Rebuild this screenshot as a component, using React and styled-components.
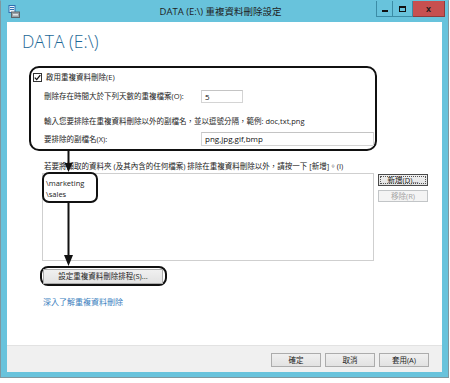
import React from "react";
import styled, { createGlobalStyle } from "styled-components";

const UI_FONT = `"Open Sans", "Noto Sans CJK TC", sans-serif`;

const GlobalStyle = createGlobalStyle`
  html, body {
    margin: 0;
    padding: 0;
    background: #ffffff;
  }
  body {
    font-family: ${UI_FONT};
    color: #222;
  }
  * {
    box-sizing: border-box;
  }
`;

const Window = styled.div`
  width: 449px;
  height: 378px;
  display: flex;
  flex-direction: column;
  background: #68c3dc;
  border: 1px solid #7f979f;
  border-top-color: #68c3dc;
  padding-bottom: 5px;
`;

const TitleBar = styled.div`
  height: 21px;
  display: grid;
  grid-template-columns: 1fr auto 1fr;
  align-items: start;
`;

const TitleIcon = styled.div`
  justify-self: start;
  margin: 4px 0 0 7px;
  width: 12px;
  height: 13px;
  display: flex;
`;

const TitleText = styled.div`
  font-size: 9.5px;
  line-height: 21px;
  color: #1e1e1e;
  white-space: nowrap;
  margin-right: 8px;
`;

const Controls = styled.div`
  justify-self: end;
  display: flex;
  margin-right: 3px;
`;

const CtrlButton = styled.div`
  width: ${({ $w }) => $w}px;
  height: 16px;
  display: flex;
  align-items: center;
  justify-content: center;
  background: ${({ $close }) => ($close ? "#c75050" : "#68c3dc")};
  border: 1px solid ${({ $close }) => ($close ? "#8c3b3b" : "#3b8ca6")};
  border-top: none;
  border-left-width: ${({ $first }) => ($first ? 1 : 0)}px;
  font: bold 9px "Liberation Sans", sans-serif;
  color: #1a1a1a;
`;

const MinGlyph = styled.span`
  width: 6px;
  height: 2px;
  margin-top: 5px;
  background: #111;
`;

const MaxGlyph = styled.span`
  width: 7px;
  height: 6px;
  border: 1px solid #111;
  border-top-width: 2px;
`;

const Client = styled.div`
  margin: 0 6px;
  flex: 1;
  display: flex;
  flex-direction: column;
`;

const Main = styled.div`
  position: relative;
  height: 323px;
  background: #ffffff;
  display: flex;
  flex-direction: column;
  font-size: 7.5px;
`;

const Heading = styled.h1`
  margin: 8px 0 0 15px;
  font: 300 17.5px/22px "Open Sans", "Liberation Sans", sans-serif;
  color: #1d6896;
`;

const Callout = styled.div`
  border: 2px solid #111;
  border-radius: ${({ $r }) => $r}px;
`;

const SettingsGroup = styled(Callout)`
  margin: 14px 0 0 22px;
  width: 348px;
  height: 85px;
  display: flex;
  flex-direction: column;
`;

const CheckRow = styled.label`
  height: 18px;
  display: flex;
  align-items: center;
  gap: 4px;
  padding-left: 2px;
  line-height: 12px;
`;

const CheckBox = styled.span`
  width: 9px;
  height: 9px;
  border: 1px solid #333;
  background: #fff;
  display: flex;
  align-items: center;
  justify-content: center;
`;

const Row = styled.div`
  height: 16px;
  margin-top: ${({ $gap }) => $gap}px;
  padding-left: 13px;
  display: flex;
  align-items: center;
  line-height: 12px;
  white-space: nowrap;
`;

const FieldLabel = styled.span`
  width: 157px;
`;

const TextInput = styled.div`
  width: ${({ $w }) => $w}px;
  height: ${({ $h }) => $h}px;
  border: 1px solid #d4d4d4;
  border-top-color: #c4c4c4;
  padding-left: 3px;
  font-size: 8px;
  line-height: 11px;
  color: #111;
`;

const ListLabel = styled.div`
  margin: 8px 0 0 37px;
  height: 14px;
  line-height: 14px;
  white-space: nowrap;
`;

const ListRow = styled.div`
  display: flex;
  margin-left: 35px;
  height: 88px;
`;

const ListBox = styled.div`
  width: 332px;
  height: 88px;
  border: 1px solid #cfcfcf;
`;

const ItemsCallout = styled(Callout)`
  margin: -2px 0 0 -1px;
  width: 56px;
  height: 31px;
  padding: 4px 0 0 2px;
  line-height: 11px;
  font-size: 7.5px;
`;

const SideButtons = styled.div`
  margin-left: 4px;
  padding-top: 1px;
  display: flex;
  flex-direction: column;
  gap: 4px;
`;

const PushButton = styled.div`
  position: relative;
  width: ${({ $w }) => $w}px;
  height: ${({ $h }) => $h}px;
  display: flex;
  align-items: center;
  justify-content: center;
  font-size: 7.5px;
  line-height: 10px;
  color: ${({ $disabled }) => ($disabled ? "#a3a3a3" : "#1e1e1e")};
  background: ${({ $disabled }) =>
    $disabled ? "#f4f4f4" : "linear-gradient(#f0f0f0, #e2e2e2)"};
  border: 1px solid
    ${({ $disabled, $focus }) =>
      $disabled ? "#c2c5c7" : $focus ? "#4a4a4a" : "#acacac"};
  white-space: nowrap;

  &::after {
    content: "";
    display: ${({ $focus }) => ($focus ? "block" : "none")};
    position: absolute;
    inset: 1px;
    border: 1px dotted #555;
  }
`;

const ScheduleCallout = styled(Callout)`
  margin: 5px 0 0 33px;
  width: 127px;
  height: 20px;
  padding: 0 0 0 1px;
  display: flex;
  align-items: center;
`;

const HelpLink = styled.a`
  margin: 9px 0 0 36px;
  height: 14px;
  line-height: 14px;
  font-size: 8px;
  color: #3a80be;
  text-decoration: none;
  align-self: flex-start;
`;

const Arrows = styled.svg`
  position: absolute;
  left: 0;
  top: 0;
  pointer-events: none;
`;

const Footer = styled.div`
  height: 27px;
  background: #f0f0f0;
  border-top: 1px solid #e2e2e2;
  display: flex;
  justify-content: flex-end;
  gap: 4px;
  padding: 7px 13px 0 0;
`;

const Check = () => (
  <svg width="7" height="7" viewBox="0 0 7 7">
    <path d="M0.8 3.6 L2.7 5.6 L6.3 1.1" fill="none" stroke="#111" strokeWidth="1.3" />
  </svg>
);

const AppIcon = () => (
  <svg width="12" height="13" viewBox="0 0 12 13">
    <rect x="1" y="0.5" width="6" height="7" fill="#e9f3fb" stroke="#2f6fb0" strokeWidth="1" />
    <rect x="2" y="2" width="4" height="1" fill="#2f6fb0" />
    <rect x="2" y="4" width="4" height="1" fill="#2f6fb0" />
    <rect x="3.5" y="7" width="8" height="5.5" fill="#9aa3a8" stroke="#5c666b" strokeWidth="1" />
    <rect x="5" y="9" width="5" height="1.5" fill="#dfe4e6" />
  </svg>
);

export default function App() {
  return (
    <>
      <GlobalStyle />
      <Window>
        <TitleBar>
          <TitleIcon>
            <AppIcon />
          </TitleIcon>
          <TitleText>DATA (E:\) 重複資料刪除設定</TitleText>
          <Controls>
            <CtrlButton $w={17} $first>
              <MinGlyph />
            </CtrlButton>
            <CtrlButton $w={20}>
              <MaxGlyph />
            </CtrlButton>
            <CtrlButton $w={32} $close>
              x
            </CtrlButton>
          </Controls>
        </TitleBar>

        <Client>
          <Main>
            <Heading>DATA (E:\)</Heading>

            <SettingsGroup $r={10}>
              <CheckRow>
                <CheckBox>
                  <Check />
                </CheckBox>
                <span>啟用重複資料刪除(E)</span>
              </CheckRow>
              <Row $gap={2}>
                <FieldLabel>刪除存在時間大於下列天數的重複檔案(O):</FieldLabel>
                <TextInput $w={42} $h={13}>5</TextInput>
              </Row>
              <Row $gap={9}>
                輸入您要排除在重複資料刪除以外的副檔名，並以逗號分隔，範例: doc,txt,png
              </Row>
              <Row $gap={2}>
                <FieldLabel>要排除的副檔名(X):</FieldLabel>
                <TextInput $w={173} $h={14}>png,jpg,gif,bmp</TextInput>
              </Row>
            </SettingsGroup>

            <ListLabel>
              若要將擷取的資料夾 (及其內含的任何檔案) 排除在重複資料刪除以外，請按一下 [新增]。(I)
            </ListLabel>

            <ListRow>
              <ListBox>
                <ItemsCallout $r={7}>
                  <div>\marketing</div>
                  <div>\sales</div>
                </ItemsCallout>
              </ListBox>
              <SideButtons>
                <PushButton $w={50} $h={12} $focus>
                  新增(D)...
                </PushButton>
                <PushButton $w={50} $h={12} $disabled>
                  移除(R)
                </PushButton>
              </SideButtons>
            </ListRow>

            <ScheduleCallout $r={8}>
              <PushButton $w={120} $h={15}>
                設定重複資料刪除排程(S)...
              </PushButton>
            </ScheduleCallout>

            <HelpLink href="#">深入了解重複資料刪除</HelpLink>

            <Arrows width="435" height="323">
              <line x1="61.5" y1="129" x2="61.5" y2="142" stroke="#111" strokeWidth="2" />
              <polygon points="57.5,141 65.5,141 61.5,150" fill="#111" />
              <line x1="61.5" y1="181" x2="61.5" y2="235" stroke="#111" strokeWidth="2" />
              <polygon points="57,233 66,233 61.5,244" fill="#111" />
            </Arrows>
          </Main>

          <Footer>
            <PushButton $w={50} $h={14}>確定</PushButton>
            <PushButton $w={50} $h={14}>取消</PushButton>
            <PushButton $w={50} $h={14}>套用(A)</PushButton>
          </Footer>
        </Client>
      </Window>
    </>
  );
}
